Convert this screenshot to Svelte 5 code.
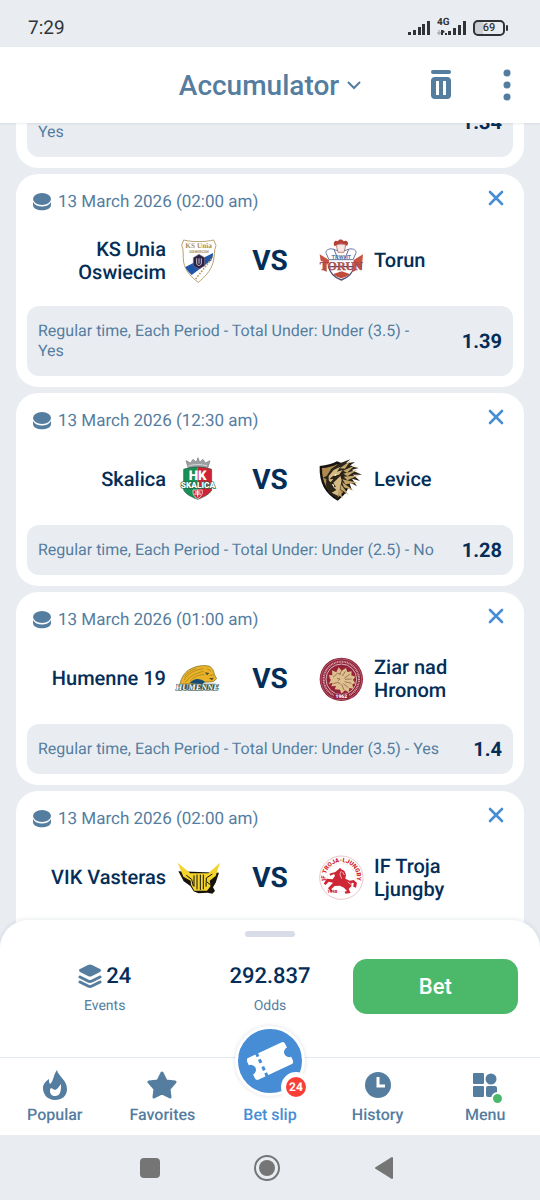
<script lang="ts">
  import { onMount } from "svelte";

  type Team = { name: string; logo: string };

  type Bet = {
    date?: string;
    home?: Team;
    away?: Team;
    pick?: string;
    odds?: string;
  };

  const bets: Bet[] = [
    {
      pick: "Regular time, Each Period - Total Under: Under (3.5) - Yes",
      odds: "1.34",
    },
    {
      date: "13 March 2026 (02:00 am)",
      home: { name: "KS Unia Oswiecim", logo: "oswiecim" },
      away: { name: "Torun", logo: "torun" },
      pick: "Regular time, Each Period - Total Under: Under (3.5) - Yes",
      odds: "1.39",
    },
    {
      date: "13 March 2026 (12:30 am)",
      home: { name: "Skalica", logo: "skalica" },
      away: { name: "Levice", logo: "levice" },
      pick: "Regular time, Each Period - Total Under: Under (2.5) - No",
      odds: "1.28",
    },
    {
      date: "13 March 2026 (01:00 am)",
      home: { name: "Humenne 19", logo: "humenne" },
      away: { name: "Ziar nad Hronom", logo: "ziar" },
      pick: "Regular time, Each Period - Total Under: Under (3.5) - Yes",
      odds: "1.4",
    },
    {
      date: "13 March 2026 (02:00 am)",
      home: { name: "VIK Vasteras", logo: "vik" },
      away: { name: "IF Troja Ljungby", logo: "troja" },
    },
  ];

  let listEl: HTMLElement;

  onMount(() => {
    // open on the second event, with the end of the first still in view
    const second = listEl.children[1] as HTMLElement;
    listEl.scrollTop = second.offsetTop - listEl.offsetTop - 51;
  });
</script>

{#snippet logo(id: string)}
  <svg class="logo" viewBox="0 0 132 132" aria-hidden="true">
    {#if id === "oswiecim"}
      <path d="M20 3C46 10 86 9 110 3l7 16c-7 16-3 32-9 52-7 26-26 44-44 59C43 115 25 96 20 70 17 50 21 32 14 19z" fill="#fff" stroke="#b9a06d" stroke-width="3" />
      <path d="M25 84L108 42c0 10-2 16-5 22L44 108C35 100 29 93 25 84z" fill="#1f56a8" />
      <path d="M56 120L108 54" stroke="#b9a06d" stroke-width="5" stroke-dasharray="5 4" />
      <path d="M66 46l17 10v24l-17 10-17-10V56z" fill="#2a2144" stroke="#86707b" stroke-width="2" />
      <path d="M59 58v14c0 10 14 10 14 0V58M66 58v16" fill="none" stroke="#cfc3d0" stroke-width="3" />
      <text class="serif" x="65" y="28" font-size="22" font-weight="700" text-anchor="middle" fill="#a98d58">KS Unia</text>
      <text x="66" y="42" font-size="12" font-weight="700" text-anchor="middle" fill="#a98d58">OSWIECIM</text>
    {:else if id === "torun"}
      <path d="M22 44c-6-12 14-19 27-11l17 4 17-4c14-8 33-1 27 11l-8 18H30z" fill="#fff" stroke="#66729d" stroke-width="3" />
      <path d="M47 22c-8-13 4-21 9-15 4-7 14-7 18 0 9-6 18 4 10 14l-5-4c-8-4-18-4-26 1z" fill="#b54136" />
      <path d="M52 20c8-6 20-6 28 0l-5 20H57z" fill="#f4e8e6" stroke="#a94e48" stroke-width="2" />
      <path d="M29 83h76c-4 20-20 34-38 40-18-6-34-20-38-40z" fill="#fff" stroke="#514d75" stroke-width="4" />
      <path d="M43 105l25-8 24 8c-7 7-16 10-25 13-9-3-18-6-24-13z" fill="#c14a39" />
      <path d="M45 31l12 30M89 31L77 61" stroke="#5f6da0" stroke-width="3" />
      <text x="67" y="59" font-size="17" font-weight="700" text-anchor="middle" fill="#5a76ac">TRWHT</text>
      <path d="M2 46l28 17v10h-7v26l-11-7V68l-7-3zM132 46l-28 17-4 36 9-4 2-16 12 15 5-3z" fill="#c85340" />
      <text class="serif" x="67" y="94" font-size="36" font-weight="700" text-anchor="middle" fill="#c85340" stroke="#85405a" stroke-width="1">TORUN</text>
    {:else if id === "skalica"}
      <path d="M33 28L27 8l14 7 7-11 10 9 5-14 5 14 10-9 7 11 14-7-6 20z" fill="#9da1a4" stroke="#777c7f" stroke-width="2" />
      <path d="M34 24c17-6 40-6 56 0" stroke="#d5d8d9" stroke-width="3" fill="none" />
      <path d="M62 27c15 0 27 1 42 7v62c-5 12-25 22-42 28z" fill="#cf2335" />
      <path d="M62 27c-15 0-27 1-42 7v62c5 12 25 22 42 28z" fill="#178f55" />
      <path d="M20 34c24-9 60-9 84 0v62c-5 12-25 22-42 28-17-6-37-16-42-28z" fill="none" stroke="#31574a" stroke-width="2" />
      <text x="62" y="65" font-size="40" font-weight="900" text-anchor="middle" fill="#fff">HK</text>
      <path d="M48 96h28v10c-3 9-8 13-14 16-6-3-11-7-14-16z" fill="#d32638" stroke="#fff" stroke-width="2" />
      <path d="M62 97v19M54 102h16M52 108h20" stroke="#fff" stroke-width="3" />
      <text x="63" y="91" font-size="25" font-weight="900" text-anchor="middle" fill="#fff" stroke="#28684b" stroke-width="4" paint-order="stroke">SKALICA</text>
    {:else if id === "levice"}
      <path d="M2 24C24 23 40 17 54 10c16 7 30 11 46 14 2 51-15 83-44 104C19 108 0 76 2 24z" fill="#16130f" />
      <path d="M9 30c17 0 32-5 45-11 12 5 25 9 39 11 0 43-12 70-37 89C25 101 9 74 9 30z" fill="#ad8b50" />
      <path d="M23 54l14-22 22-15 35-13-13 12 27-4-17 12 28 6-22 6 32 14-27 0 21 19-24-7 15 23-24-13 9 25-20-13 1 25-16-15-9 29-25-19-9-21 1-20-10-4z" fill="#2b2419" />
      <path d="M29 54l15-18 20-10-10 15 17-5-11 14-18 4-11 10 12-1-8 10-6-6zM43 74l21-20 4 12-4 22-6 26-20-10 14-8-10-10 9 1z" fill="#d6ba83" />
      <path d="M62 31l32-22-16 23zM72 38l36-16-24 22zM73 47l42-12-30 20zM74 56l46-4-35 15zM70 64l46 10-37 5zM69 72l36 26-30-10zM67 80l22 31-25-18zM61 90l10 32-15-16z" fill="#c4a56a" />
      <path d="M44 51l9-4-2 7zM38 77l8 3-2 8z" fill="#fff2d2" />
    {:else if id === "humenne"}
      <path d="M8 84C13 59 25 43 42 35c17-8 38-12 57-7l9 10 5 16 6 11-10 9-27 2-60 8z" fill="#e9b229" stroke="#746925" stroke-width="2" />
      <path d="M21 70c11-20 31-31 58-35M25 76c14-19 31-27 55-33M39 73c10-12 22-19 44-21M58 35c-16 4-26 11-35 24M90 35l12 8M97 56l14-3" stroke="#a17b1b" stroke-width="2" fill="none" />
      <path d="M84 46l13 2-7 7zM96 64l14-2-5 8z" fill="#514b22" />
      <path d="M38 78c13-14 28-16 46-4l-8 8z" fill="#174c72" />
      <path d="M12 80h105l-6 20H6z" fill="#465c4c" />
      <text class="serif" x="61" y="99" font-size="25" font-weight="700" font-style="italic" text-anchor="middle" fill="#fff" stroke="#3d5a51" stroke-width="3" paint-order="stroke">HUMENNE</text>
    {:else if id === "ziar"}
      <circle cx="67" cy="67" r="65" fill="#8f2038" />
      <circle cx="67" cy="67" r="61" fill="none" stroke="#efd9d9" stroke-width="1" />
      <circle cx="67" cy="67" r="53" fill="none" stroke="#d9a8aa" stroke-width="6" stroke-dasharray="3 2" />
      <circle cx="67" cy="67" r="46" fill="#94233a" stroke="#fff" stroke-width="2" />
      <path d="M33 66l-3-12 10 1-1-15 13 6 7-15 9 10 13-8 4 12 13-2-1 12 12 4-7 9 7 11-9 3 3 13-12-2-2 13-11-6-11 10-4-12-16-1 4-10-14 1 4-11-12 4 7-13z" fill="#dfbf8e" />
      <path d="M42 61l13-12 11 3M54 64l9 2-6 5M43 80l13-4 9 5M68 39l-6 13M79 43l-9 14M93 51L76 64M98 66l-20 1M97 79L77 74M88 92L73 80M75 99l-7-17" fill="none" stroke="#7c5140" stroke-width="2" />
      <path d="M44 110h46v16H44z" fill="#8f2038" />
      <text x="67" y="124" font-size="15" font-weight="900" text-anchor="middle" fill="#fff">1962</text>
    {:else if id === "vik"}
      <path d="M4 46l16 30 20 14 10 16 14 6 28-2 14 3 8-8-6-11 8-14 10-30z" fill="#15130b" />
      <path d="M2 20l38 32h54l35-32-13 40-18 14 3 16-11 14H52L42 86l-1-12-22-12z" fill="#f4d32c" />
      <path d="M28 58l16 12 5 20M106 54L88 66l-1 26M51 58v34M60 56v44M70 56v46M79 56v44M90 78l12 10" stroke="#15130b" stroke-width="3" fill="none" />
    {:else if id === "troja"}
      <circle cx="67" cy="65" r="65" fill="#fff" stroke="#dcaaa9" stroke-width="2" />
      <circle cx="67" cy="65" r="43" fill="none" stroke="#ecc8c7" stroke-width="1" />
      <path id="troja-arc" d="M30 94A47 47 0 1 1 104 94" fill="none" />
      <text font-size="18" font-weight="900" fill="#cf2635"><textPath href="#troja-arc" startOffset="50%" text-anchor="middle">IF TROJA-LJUNGBY</textPath></text>
      <path d="M49 48l10-8 4-5 4 5 9 4 5 12-2 12 13 6 12-2 10 9-3 14-8-3 1-11-6-1-1 11-8 8 6 12-16 2-2-6 7-2-9-10-12-6-16 1-10 9 5 7-6 2-9-11 15-17-13-3-9 10-6-4 9-15 18 2 7-11-3-5-11 5-3-6z" fill="#cf2635" />
      <path d="M67 45l-4 10 5 13M86 78l11 8M71 48l5 9" stroke="#fff" stroke-width="2" fill="none" />
      <text x="40" y="112" font-size="13" font-weight="900" text-anchor="middle" fill="#cf2635">1948</text>
    {/if}
  </svg>
{/snippet}

<div class="app">
  <div class="status">
    <span>7:29</span>
    <div class="status-icons">
      <svg class="signal" viewBox="0 0 24 15" aria-hidden="true">
        <path d="M1 12h3v3H1zM6 10h3v5H6zM11 7h3v8h-3zM15 4h3v11h-3zM20 1h3v14h-3z" />
      </svg>
      <div class="mobile">
        <span class="network">4G</span>
        <svg class="signal signal--data" viewBox="0 0 30 15" aria-hidden="true">
          <path d="M2 10v5M0 13h4" stroke="#9a9da1" fill="none" />
          <path d="M4 10h2v5H4zM6 10l2 2-2 1zM8 13h2v2H8zM11 11h3v4h-3zM16 8h3v7h-3zM21 5h3v10h-3zM26 1h3v14h-3z" />
        </svg>
      </div>
      <div class="battery">69</div>
    </div>
  </div>

  <header class="header">
    <button class="title" type="button">
      Accumulator
      <svg width="14" height="14" viewBox="0 0 14 14" aria-hidden="true">
        <path d="M1 4l6 6 6-6" fill="none" stroke="currentColor" stroke-width="2" />
      </svg>
    </button>
    <div class="actions">
      <button class="icon-button" type="button" aria-label="Delete all">
        <svg width="20" height="30" viewBox="0 0 20 30" aria-hidden="true">
          <rect width="20" height="4" rx="2" fill="currentColor" />
          <path fill-rule="evenodd" d="M4 7h12a4 4 0 0 1 4 4v14a4 4 0 0 1-4 4H4a4 4 0 0 1-4-4V11a4 4 0 0 1 4-4zM5 11v14h3V11zM12 11v14h3V11z" fill="currentColor" />
        </svg>
      </button>
      <button class="icon-button" type="button" aria-label="More">
        <svg width="8" height="32" viewBox="0 0 8 32" fill="currentColor" aria-hidden="true">
          <circle cx="4" cy="4" r="3.5" />
          <circle cx="4" cy="16" r="3.5" />
          <circle cx="4" cy="28" r="3.5" />
        </svg>
      </button>
    </div>
  </header>

  <main class="list" bind:this={listEl}>
    {#each bets as bet}
      <article class="card">
        {#if bet.date}
          <div class="card-head">
            <svg class="puck" width="20" height="18" viewBox="0 0 20 18" fill="currentColor" aria-hidden="true">
              <ellipse cx="10" cy="6" rx="9" ry="6" />
              <path d="M1 9c3 6 15 6 18 0v3c0 7-18 7-18 0z" />
            </svg>
            <time>{bet.date}</time>
            <button class="remove" type="button" aria-label="Remove event">
              <svg width="18" height="18" viewBox="0 0 18 18" aria-hidden="true">
                <path d="M3 3l12 12M15 3L3 15" fill="none" stroke="currentColor" stroke-width="2.6" stroke-linecap="round" />
              </svg>
            </button>
          </div>
        {/if}
        {#if bet.home && bet.away}
          <div class="teams">
            <span class="team team--home">{bet.home.name}</span>
            {@render logo(bet.home.logo)}
            <strong class="vs">VS</strong>
            {@render logo(bet.away.logo)}
            <span class="team">{bet.away.name}</span>
          </div>
        {/if}
        {#if bet.pick}
          <div class="pick">
            <span>{bet.pick}</span>
            <strong class="odds">{bet.odds}</strong>
          </div>
        {/if}
      </article>
    {/each}
  </main>

  <section class="sheet" aria-label="Bet summary">
    <div class="handle"></div>
    <div class="summary">
      <div class="total">
        <span class="total-value">
          <svg width="24" height="26" viewBox="0 0 24 26" aria-hidden="true">
            <path d="M10 1q2-1 4 0l8 4q2 1 0 3l-8 4q-2 1-4 0L2 8Q0 6 2 5z" fill="#557d9f" />
            <path d="M2 13l8 4q2 1 4 0l8-4M2 18l8 4q2 1 4 0l8-4" fill="none" stroke="#557d9f" stroke-width="3" stroke-linecap="round" />
          </svg>
          24
        </span>
        <span class="total-label">Events</span>
      </div>
      <div class="total">
        <span class="total-value">292.837</span>
        <span class="total-label">Odds</span>
      </div>
      <button class="bet" type="button">Bet</button>
    </div>
  </section>

  <nav class="nav" aria-label="Main">
    <a class="nav-item" href="#popular">
      <span class="nav-icon">
        <svg width="24" height="30" viewBox="0 0 24 30" aria-hidden="true">
          <path d="M14 0c1 6 10 10 10 19 0 7-5 11-12 11S0 25 0 18c0-4 3-7 6-9 0 2 0 4 1 5 4-3 3-9 7-14z" fill="currentColor" />
          <path d="M18 14c0 6 0 12-6 12-3 0-5-2-5-5 0-1 0-2 1-3l4 2c3-1 4-4 6-6z" fill="#fff" />
        </svg>
      </span>
      Popular
    </a>
    <a class="nav-item" href="#favorites">
      <span class="nav-icon">
        <svg width="30" height="28" viewBox="0 0 30 28" aria-hidden="true">
          <path d="M15 2l4 8 9 1-6 7 1 8-8-4-8 4 1-8-6-7 9-1z" fill="currentColor" stroke="currentColor" stroke-width="3" stroke-linejoin="round" />
        </svg>
      </span>
      Favorites
    </a>
    <a class="nav-item nav-item--active" href="#slip" aria-current="page">
      <span class="nav-icon">
        <span class="slip">
          <svg width="46" height="38" viewBox="0 0 46 38" aria-hidden="true">
            <g transform="rotate(-25 23 19)">
              <path d="M5 7h36q3 0 3 3v4a5 5 0 0 0 0 10v4q0 3-3 3H5q-3 0-3-3v-4a5 5 0 0 0 0-10v-4q0-3 3-3z" fill="#fff" />
              <path d="M14 6v4M14 13v4M14 21v4M14 28v4" stroke="#478dd6" stroke-width="3" />
            </g>
          </svg>
          <span class="badge">24</span>
        </span>
      </span>
      Bet slip
    </a>
    <a class="nav-item" href="#history">
      <span class="nav-icon">
        <svg width="26" height="26" viewBox="0 0 26 26" aria-hidden="true">
          <circle cx="13" cy="13" r="13" fill="currentColor" />
          <path d="M13 5v9h7" fill="none" stroke="#fff" stroke-width="3" />
        </svg>
      </span>
      History
    </a>
    <a class="nav-item" href="#menu">
      <span class="nav-icon">
        <svg width="24" height="24" viewBox="0 0 24 24" fill="currentColor" aria-hidden="true">
          <rect width="11" height="11" rx="1" />
          <circle cx="18" cy="6" r="5.5" />
          <rect y="13" width="11" height="11" rx="1" />
          <rect x="13" y="13" width="11" height="11" rx="2" />
        </svg>
        <span class="dot"></span>
      </span>
      Menu
    </a>
  </nav>

  <div class="system">
    <button type="button" aria-label="Recent apps">
      <svg width="20" height="20" viewBox="0 0 20 20" aria-hidden="true">
        <rect width="20" height="20" rx="4" fill="#757575" />
      </svg>
    </button>
    <button type="button" aria-label="Home">
      <svg width="28" height="28" viewBox="0 0 28 28" aria-hidden="true">
        <circle cx="14" cy="14" r="12" fill="none" stroke="#757575" stroke-width="2" />
        <circle cx="14" cy="14" r="8" fill="#757575" />
      </svg>
    </button>
    <button type="button" aria-label="Back">
      <svg width="20" height="24" viewBox="0 0 20 24" aria-hidden="true">
        <path d="M2 12L18 2v20z" fill="#757575" stroke="#757575" stroke-width="2" stroke-linejoin="round" />
      </svg>
    </button>
  </div>
</div>

<style>
  :global(body) {
    background: #e9edf2;
  }

  .app {
    display: flex;
    flex-direction: column;
    height: 100vh;
    overflow: hidden;
    background: #e9edf2;
    color: #557d9f;
    font-family: Roboto, sans-serif;
    text-rendering: geometricPrecision;
  }

  .app :global(*) {
    box-sizing: border-box;
  }

  svg {
    display: block;
    flex: none;
  }

  button {
    padding: 0;
    border: 0;
    background: none;
    color: inherit;
    font: inherit;
    cursor: pointer;
  }

  /* Status bar */
  .status {
    display: flex;
    flex: none;
    align-items: center;
    justify-content: space-between;
    height: 47px;
    padding: 8px 35px 0 28px;
    color: #303439;
    font-size: 19px;
  }

  .status-icons {
    display: flex;
    align-items: center;
    gap: 6px;
  }

  .signal {
    width: 24px;
    height: 15px;
    fill: #303439;
  }

  .signal--data {
    width: 30px;
  }

  .mobile {
    position: relative;
  }

  .network {
    position: absolute;
    top: -2px;
    left: 0;
    font-size: 10px;
    font-weight: 700;
    line-height: 10px;
  }

  .battery {
    position: relative;
    width: 32px;
    height: 16px;
    border: 2px solid #303439;
    border-radius: 5px;
    background: linear-gradient(90deg, #cccfd3 30%, transparent 30%);
    font-size: 11px;
    font-weight: 500;
    line-height: 12px;
    text-align: center;
  }

  .battery::after {
    content: "";
    position: absolute;
    top: 3px;
    right: -5px;
    width: 2px;
    height: 6px;
    border-radius: 1px;
    background: #303439;
  }

  /* Header */
  .header {
    display: grid;
    flex: none;
    grid-template-columns: 1fr auto 1fr;
    align-items: center;
    height: 76px;
    padding: 0 29px;
    background: #fff;
    box-shadow: 0 1px 2px rgba(60, 80, 110, 0.1);
    z-index: 1;
  }

  .title {
    display: flex;
    grid-column: 2;
    align-items: center;
    gap: 8px;
    font-size: 28px;
    font-weight: 500;
  }

  .actions {
    display: flex;
    justify-content: flex-end;
    gap: 52px;
  }

  .icon-button {
    display: flex;
    align-items: center;
  }

  /* Events */
  .list {
    display: flex;
    flex: 1;
    flex-direction: column;
    gap: 6px;
    min-height: 0;
    padding: 0 16px;
    overflow-y: auto;
    scrollbar-width: none;
  }

  .card {
    display: flex;
    flex: none;
    flex-direction: column;
    min-height: 193px;
    padding: 15px 11px 11px;
    border-radius: 22px;
    background: #fff;
  }

  .card-head {
    display: flex;
    align-items: center;
    gap: 6px;
    height: 26px;
    padding: 0 8px 0 5px;
    font-size: 17px;
  }

  .remove {
    align-self: flex-start;
    margin-left: auto;
    color: #478dd6;
  }

  .teams {
    display: grid;
    grid-template-columns: 1fr 44px 76px 44px 1fr;
    align-items: center;
    gap: 11px;
    height: 91px;
    padding: 0 11px;
    color: #042e57;
    font-size: 20px;
    font-weight: 500;
    line-height: 23px;
  }

  .team--home {
    text-align: right;
  }

  .logo {
    width: 44px;
    height: 44px;
    overflow: visible;
  }

  .logo text {
    font-family: Roboto, sans-serif;
  }

  .logo .serif {
    font-family: "Liberation Serif", serif;
  }

  .vs {
    font-size: 28px;
    font-weight: 700;
    text-align: center;
  }

  .pick {
    display: flex;
    align-items: center;
    justify-content: space-between;
    gap: 25px;
    margin-top: auto;
    padding: 15px 11px;
    border-radius: 12px;
    background: #e9edf2;
    font-size: 16px;
    line-height: 20px;
  }

  .odds {
    color: #042e57;
    font-size: 20px;
    font-weight: 700;
  }

  /* Summary sheet */
  .sheet {
    flex: none;
    margin-top: -28px;
    padding: 11px 22px 43px;
    border-radius: 28px 28px 0 0;
    background: #fff;
    box-shadow: 0 -1px 4px rgba(60, 80, 110, 0.12);
    z-index: 1;
  }

  .handle {
    width: 50px;
    height: 6px;
    margin: 0 auto 22px;
    border-radius: 3px;
    background: #d8dce8;
  }

  .summary {
    display: grid;
    grid-template-columns: 1fr 1fr 1fr;
    align-items: center;
  }

  .total {
    display: flex;
    flex-direction: column;
    align-items: center;
    gap: 8px;
    padding-top: 5px;
  }

  .total-value {
    display: flex;
    align-items: center;
    gap: 4px;
    color: #042e57;
    font-size: 22px;
    font-weight: 500;
    line-height: 26px;
  }

  .total-label {
    font-size: 14px;
    line-height: 16px;
  }

  .bet {
    height: 55px;
    border-radius: 14px;
    background: #4cb869;
    color: #fff;
    font-size: 22px;
    font-weight: 500;
  }

  /* Navigation */
  .nav {
    display: grid;
    flex: none;
    grid-template-columns: repeat(5, 1fr);
    height: 78px;
    padding: 0 1px;
    border-top: 1px solid #e3e9ef;
    background: #fff;
    z-index: 2;
  }

  .nav-item {
    display: flex;
    flex-direction: column;
    align-items: center;
    padding-top: 12px;
    color: inherit;
    font-size: 16px;
    font-weight: 500;
    line-height: 20px;
    text-decoration: none;
  }

  .nav-item--active {
    color: #478dd6;
  }

  .nav-icon {
    position: relative;
    display: flex;
    align-items: center;
    justify-content: center;
    height: 30px;
    margin-bottom: 5px;
  }

  .slip {
    position: absolute;
    bottom: 4px;
    display: flex;
    align-items: center;
    justify-content: center;
    width: 70px;
    height: 70px;
    border: 3px solid #fff;
    border-radius: 50%;
    background: #478dd6;
    box-shadow: 0 0 4px rgba(60, 80, 110, 0.18);
  }

  .badge {
    position: absolute;
    right: -9px;
    bottom: -9px;
    width: 30px;
    height: 30px;
    border: 5px solid #fff;
    border-radius: 50%;
    background: #f93f35;
    color: #fff;
    font-size: 12px;
    font-weight: 700;
    line-height: 20px;
    text-align: center;
  }

  .dot {
    position: absolute;
    right: -7px;
    bottom: -5px;
    width: 13px;
    height: 13px;
    border: 2px solid #fff;
    border-radius: 50%;
    background: #4cb869;
  }

  /* System bar */
  .system {
    display: flex;
    flex: none;
    align-items: center;
    justify-content: center;
    gap: 93px;
    height: 65px;
    padding-right: 6px;
  }
</style>
